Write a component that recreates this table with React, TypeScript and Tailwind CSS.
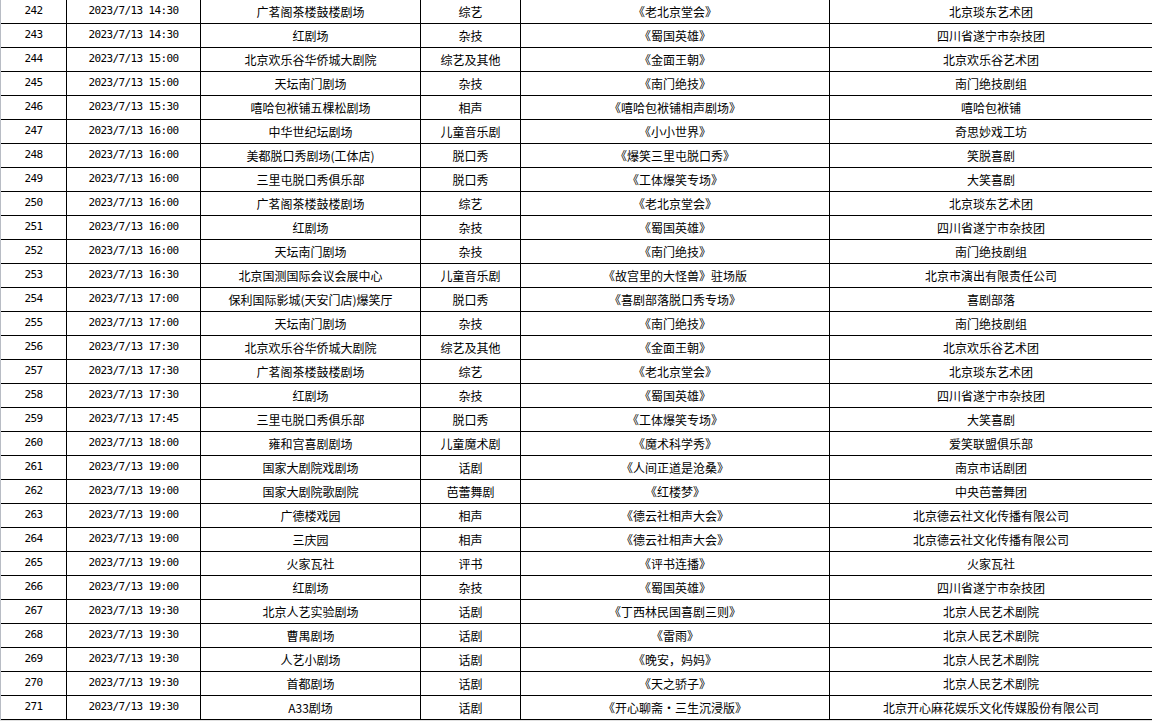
import React from 'react';

const rows = [
  '242|14:30|广茗阁茶楼鼓楼剧场|综艺|《老北京堂会》|北京琰东艺术团',
  '243|14:30|红剧场|杂技|《蜀国英雄》|四川省遂宁市杂技团',
  '244|15:00|北京欢乐谷华侨城大剧院|综艺及其他|《金面王朝》|北京欢乐谷艺术团',
  '245|15:00|天坛南门剧场|杂技|《南门绝技》|南门绝技剧组',
  '246|15:30|嘻哈包袱铺五棵松剧场|相声|《嘻哈包袱铺相声剧场》|嘻哈包袱铺',
  '247|16:00|中华世纪坛剧场|儿童音乐剧|《小小世界》|奇思妙戏工坊',
  '248|16:00|美都脱口秀剧场(工体店)|脱口秀|《爆笑三里屯脱口秀》|笑脱喜剧',
  '249|16:00|三里屯脱口秀俱乐部|脱口秀|《工体爆笑专场》|大笑喜剧',
  '250|16:00|广茗阁茶楼鼓楼剧场|综艺|《老北京堂会》|北京琰东艺术团',
  '251|16:00|红剧场|杂技|《蜀国英雄》|四川省遂宁市杂技团',
  '252|16:00|天坛南门剧场|杂技|《南门绝技》|南门绝技剧组',
  '253|16:30|北京国测国际会议会展中心|儿童音乐剧|《故宫里的大怪兽》驻场版|北京市演出有限责任公司',
  '254|17:00|保利国际影城(天安门店)爆笑厅|脱口秀|《喜剧部落脱口秀专场》|喜剧部落',
  '255|17:00|天坛南门剧场|杂技|《南门绝技》|南门绝技剧组',
  '256|17:30|北京欢乐谷华侨城大剧院|综艺及其他|《金面王朝》|北京欢乐谷艺术团',
  '257|17:30|广茗阁茶楼鼓楼剧场|综艺|《老北京堂会》|北京琰东艺术团',
  '258|17:30|红剧场|杂技|《蜀国英雄》|四川省遂宁市杂技团',
  '259|17:45|三里屯脱口秀俱乐部|脱口秀|《工体爆笑专场》|大笑喜剧',
  '260|18:00|雍和宫喜剧剧场|儿童魔术剧|《魔术科学秀》|爱笑联盟俱乐部',
  '261|19:00|国家大剧院戏剧场|话剧|《人间正道是沧桑》|南京市话剧团',
  '262|19:00|国家大剧院歌剧院|芭蕾舞剧|《红楼梦》|中央芭蕾舞团',
  '263|19:00|广德楼戏园|相声|《德云社相声大会》|北京德云社文化传播有限公司',
  '264|19:00|三庆园|相声|《德云社相声大会》|北京德云社文化传播有限公司',
  '265|19:00|火家瓦社|评书|《评书连播》|火家瓦社',
  '266|19:00|红剧场|杂技|《蜀国英雄》|四川省遂宁市杂技团',
  '267|19:30|北京人艺实验剧场|话剧|《丁西林民国喜剧三则》|北京人民艺术剧院',
  '268|19:30|曹禺剧场|话剧|《雷雨》|北京人民艺术剧院',
  '269|19:30|人艺小剧场|话剧|《晚安，妈妈》|北京人民艺术剧院',
  '270|19:30|首都剧场|话剧|《天之骄子》|北京人民艺术剧院',
  '271|19:30|A33剧场|话剧|《开心聊斋・三生沉浸版》|北京开心麻花娱乐文化传媒股份有限公司',
].map((r) => r.split('|'));

const cjk = "font-['Noto_Sans_CJK_SC',sans-serif] text-[12px]";
const mono = "font-['DejaVu_Sans_Mono','Noto_Sans_CJK_SC',monospace] text-[11px] tracking-[-0.62px] font-light";

const App = () => {
  return (
    <div className="w-[1152px] h-[721px] overflow-hidden bg-white text-black">
      <div className="border-l border-[#b8bcc4]">
        {rows.map(([no, time, venue, type, show, company]) => (
          <div
            key={no}
            className="grid grid-cols-[66px_134px_220px_100px_309px_1fr] h-6 border-b border-black"
          >
            <div className={`flex items-center justify-center border-r border-black ${mono}`}>{no}</div>
            <div className={`flex items-center justify-center border-r border-black ${mono}`}>
              2023/7/13 {time}
            </div>
            <div className={`flex items-center justify-center border-r border-black whitespace-nowrap ${cjk}`}>
              {venue}
            </div>
            <div className={`flex items-center justify-center border-r border-black whitespace-nowrap ${cjk}`}>
              {type}
            </div>
            <div className={`flex items-center justify-center border-r border-black whitespace-nowrap ${cjk}`}>
              {show}
            </div>
            <div className={`flex items-center justify-center whitespace-nowrap ${cjk}`}>{company}</div>
          </div>
        ))}
      </div>
      <div className="h-px bg-[#e0e0e0]" />
    </div>
  );
};

export default App;
